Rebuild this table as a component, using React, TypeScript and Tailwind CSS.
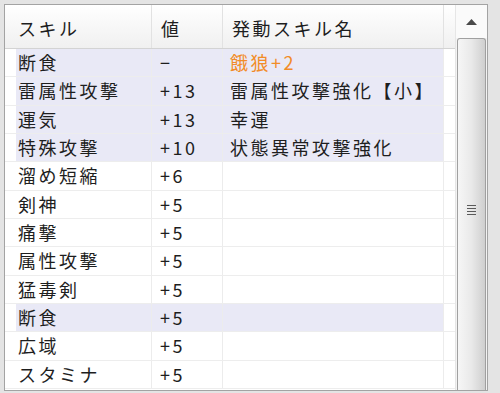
import React from "react";

type Row = { skill: string; value: string; active?: string; orange?: boolean; hl?: boolean };

const rows: Row[] = [
  { skill: "断食", value: "−", active: "餓狼+2", orange: true, hl: true },
  { skill: "雷属性攻撃", value: "+13", active: "雷属性攻撃強化【小】", hl: true },
  { skill: "運気", value: "+13", active: "幸運", hl: true },
  { skill: "特殊攻撃", value: "+10", active: "状態異常攻撃強化", hl: true },
  { skill: "溜め短縮", value: "+6" },
  { skill: "剣神", value: "+5" },
  { skill: "痛撃", value: "+5" },
  { skill: "属性攻撃", value: "+5" },
  { skill: "猛毒剣", value: "+5" },
  { skill: "断食", value: "+5", hl: true },
  { skill: "広域", value: "+5" },
  { skill: "スタミナ", value: "+5" },
];

const font = { fontFamily: '"Noto Sans CJK JP", "Liberation Sans", sans-serif' };

export default function App() {
  return (
    <div
      className="w-[500px] h-[393px] bg-[#e4e4e4] pt-[4px] pl-[4px] pr-[12px] pb-[2px] overflow-hidden"
      style={font}
    >
      <div className="h-full border border-[#a3a3a3] bg-white flex overflow-hidden">
        {/* table */}
        <div className="w-[450px] flex flex-col text-[18px] tracking-[2.5px] text-[#1e1e1e]">
          {/* header */}
          <div className="flex h-[44px] shrink-0 border-b border-[#d3d3d3] bg-gradient-to-b from-white to-[#f0f0f0]">
            <div className="w-[11px]" />
            <div className="w-[136px] border-r border-[#e2e2e2] pl-[2px] pt-[4px] flex items-center">スキル</div>
            <div className="w-[71px] border-r border-[#e2e2e2] pl-[9px] pt-[4px] flex items-center">値</div>
            <div className="w-[221px] border-r border-[#e2e2e2] pl-[9px] pt-[4px] flex items-center">発動スキル名</div>
            <div className="flex-1" />
          </div>
          {rows.map((r, i) => (
            <div key={i} className="flex h-[28.33px] shrink-0 border-b border-[#ededed]">
              <div className="w-[11px]" />
              <div className={`w-[136px] border-r border-[#ececec] pl-[2px] flex items-center ${r.hl ? "bg-[#e9e9f6]" : ""}`}>
                {r.skill}
              </div>
              <div className={`w-[71px] border-r border-[#ececec] pl-[8px] flex items-center ${r.hl ? "bg-[#e9e9f6]" : ""}`}>
                {r.value}
              </div>
              <div
                className={`w-[221px] border-r border-[#ececec] pl-[7px] flex items-center ${r.hl ? "bg-[#e9e9f6]" : ""} ${r.orange ? "text-[#f28c28]" : ""}`}
              >
                {r.active}
              </div>
              <div className="flex-1" />
            </div>
          ))}
        </div>

        {/* scrollbar */}
        <div className="flex-1 border-l border-[#e6e6e6] bg-[#f3f3f3] flex flex-col">
          <div className="h-[33px] shrink-0 flex items-center justify-center bg-[#fafafa]">
            <svg width="11" height="6" viewBox="0 0 11 6">
              <path d="M5.5 0 L11 6 L0 6 Z" fill="#4a4a4a" />
            </svg>
          </div>
          <div className="flex-1 mx-[1px] border border-b-0 border-[#a0a0a0] rounded-t-[3px] bg-gradient-to-r from-[#f6f6f6] via-[#e9e9e9] to-[#cfcfcf] flex items-start justify-center pt-[166px]">
            <div className="flex flex-col gap-[2px]">
              <div className="w-[9px] h-[1px] bg-[#5a5a5a]" />
              <div className="w-[9px] h-[1px] bg-[#5a5a5a]" />
              <div className="w-[9px] h-[1px] bg-[#5a5a5a]" />
              <div className="w-[9px] h-[1px] bg-[#5a5a5a]" />
            </div>
          </div>
        </div>
      </div>
    </div>
  );
}
